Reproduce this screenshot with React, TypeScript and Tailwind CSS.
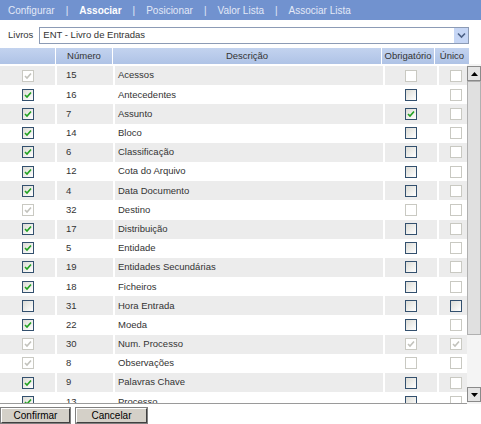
import React from 'react'

type Box = 'on' | 'off' | 'don' | 'doff'

const rows: { n: string; d: string; a: Box; o: Box; u: Box }[] = [
  { n: '15', d: 'Acessos', a: 'don', o: 'doff', u: 'doff' },
  { n: '16', d: 'Antecedentes', a: 'on', o: 'off', u: 'doff' },
  { n: '7', d: 'Assunto', a: 'on', o: 'on', u: 'doff' },
  { n: '14', d: 'Bloco', a: 'on', o: 'off', u: 'doff' },
  { n: '6', d: 'Classificação', a: 'on', o: 'off', u: 'doff' },
  { n: '12', d: 'Cota do Arquivo', a: 'on', o: 'off', u: 'doff' },
  { n: '4', d: 'Data Documento', a: 'on', o: 'off', u: 'doff' },
  { n: '32', d: 'Destino', a: 'don', o: 'doff', u: 'doff' },
  { n: '17', d: 'Distribuição', a: 'on', o: 'off', u: 'doff' },
  { n: '5', d: 'Entidade', a: 'on', o: 'off', u: 'doff' },
  { n: '19', d: 'Entidades Secundárias', a: 'on', o: 'off', u: 'doff' },
  { n: '18', d: 'Ficheiros', a: 'on', o: 'off', u: 'doff' },
  { n: '31', d: 'Hora Entrada', a: 'off', o: 'off', u: 'off' },
  { n: '22', d: 'Moeda', a: 'on', o: 'off', u: 'doff' },
  { n: '30', d: 'Num. Processo', a: 'don', o: 'don', u: 'don' },
  { n: '8', d: 'Observações', a: 'don', o: 'doff', u: 'doff' },
  { n: '9', d: 'Palavras Chave', a: 'on', o: 'off', u: 'doff' },
  { n: '13', d: 'Processo', a: 'on', o: 'off', u: 'doff' },
]

function Check({ s }: { s: Box }) {
  const disabled = s === 'don' || s === 'doff'
  const checked = s === 'on' || s === 'don'
  return (
    <span
      className={`inline-flex w-[12px] h-[12px] items-center justify-center border ${
        disabled ? 'border-[#c9c9c2] bg-white' : 'border-[#33506e] bg-gradient-to-br from-[#dcdcd6] to-white'
      }`}
    >
      {checked && (
        <svg width="8" height="8" viewBox="0 0 8 8">
          <path
            d="M1 4 L3 6 L7 1.5"
            fill="none"
            stroke={disabled ? '#c2c2bc' : '#21a121'}
            strokeWidth="1.6"
          />
        </svg>
      )}
    </span>
  )
}

function Btn({ label, w }: { label: string; w: string }) {
  return (
    <button
      className={`${w} h-[15px] bg-[#d4d0c8] border border-t-white border-l-white border-r-[#404040] border-b-[#404040] outline outline-1 outline-[#808080] text-[10px] leading-none text-black`}
    >
      {label}
    </button>
  )
}

export default function App() {
  const nav = ['Configurar', 'Associar', 'Posicionar', 'Valor Lista', 'Associar Lista']
  return (
    <div className="w-[481px] h-[424px] bg-white overflow-hidden text-[#333]" style={{ fontFamily: '"Liberation Sans", Arial, sans-serif' }}>
      {/* top tabs */}
      <div className="h-[20px] bg-[#7192cf] flex items-center pl-[8px] text-[10px] text-[#e3e9f7]">
        {nav.map((t, i) => (
          <React.Fragment key={t}>
            {i > 0 && <span className="px-[11px]">|</span>}
            <span className={i === 1 ? 'font-bold text-white' : ''}>{t}</span>
          </React.Fragment>
        ))}
      </div>

      {/* livros */}
      <div className="h-[28px] flex items-center pt-[3px] pl-[8px] pr-[12px] gap-[6px] text-[9.5px]">
        <span>Livros</span>
        <div className="flex-1 h-[17px] border border-[#8c9bb5] flex items-center justify-between pl-[3px]">
          <span>ENT - Livro de Entradas</span>
          <span className="w-[15px] h-[15px] bg-[#c6d6f5] border-l border-white flex items-center justify-center">
            <svg width="9" height="7" viewBox="0 0 9 7">
              <path d="M1 1.5 L4.5 5 L8 1.5" fill="none" stroke="#4d6185" strokeWidth="1.6" />
            </svg>
          </span>
        </div>
      </div>

      {/* table */}
      <div className="flex h-[356px]">
        <div className="w-[467px] flex flex-col">
          <div className="h-[16px] grid grid-cols-[55px_56px_268px_52px_34px] gap-x-[1px] bg-white text-[9.5px] text-[#333]">
            <div className="bg-gradient-to-b from-[#c3d3ef] to-[#afc3e6]" />
            <div className="bg-gradient-to-b from-[#c3d3ef] to-[#afc3e6] flex items-center justify-center">Número</div>
            <div className="bg-gradient-to-b from-[#c3d3ef] to-[#afc3e6] flex items-center justify-center">Descrição</div>
            <div className="bg-gradient-to-b from-[#c3d3ef] to-[#afc3e6] flex items-center justify-center">Obrigatório</div>
            <div className="bg-gradient-to-b from-[#c3d3ef] to-[#afc3e6] flex items-center justify-center">Único</div>
          </div>
          <div className="h-[340px] overflow-hidden pt-[2px] border-b border-[#9a9a9a]">
            {rows.map((r, i) => {
              const bg = i % 2 === 0 ? 'bg-[#ececec]' : 'bg-white'
              return (
                <div key={r.n} className="h-[19.2px] grid grid-cols-[55px_56px_268px_52px_34px] gap-x-[2px] text-[9.5px]">
                  <div className={`${bg} flex items-center justify-center`}><Check s={r.a} /></div>
                  <div className={`${bg} flex items-center pl-[9px]`}>{r.n}</div>
                  <div className={`${bg} flex items-center pl-[3px]`}>{r.d}</div>
                  <div className={`${bg} flex items-center justify-center`}><Check s={r.o} /></div>
                  <div className={`${bg} flex items-center justify-center`}><Check s={r.u} /></div>
                </div>
              )
            })}
          </div>
        </div>

        {/* scrollbar */}
        <div className="w-[14px] h-[340px] mt-[16px] bg-[#f4f4f4] flex flex-col">
          <div className="h-[15px] mt-[2px] border border-[#8a8a8a] bg-[#e4e4e4] flex items-center justify-center">
            <svg width="7" height="4" viewBox="0 0 7 4"><path d="M0 4 L3.5 0 L7 4Z" fill="#000" /></svg>
          </div>
          <div className="h-[254px] border border-[#b0b0b0] bg-[#e0e0e0]" />
          <div className="flex-1" />
          <div className="h-[15px] mb-[2px] border border-[#8a8a8a] bg-[#e4e4e4] flex items-center justify-center">
            <svg width="7" height="4" viewBox="0 0 7 4"><path d="M0 0 L3.5 4 L7 0Z" fill="#000" /></svg>
          </div>
        </div>
      </div>

      {/* buttons */}
      <div className="flex gap-[6px] pl-[1px] pt-[4px]">
        <Btn label="Confirmar" w="w-[69px]" />
        <Btn label="Cancelar" w="w-[71px]" />
      </div>
    </div>
  )
}
